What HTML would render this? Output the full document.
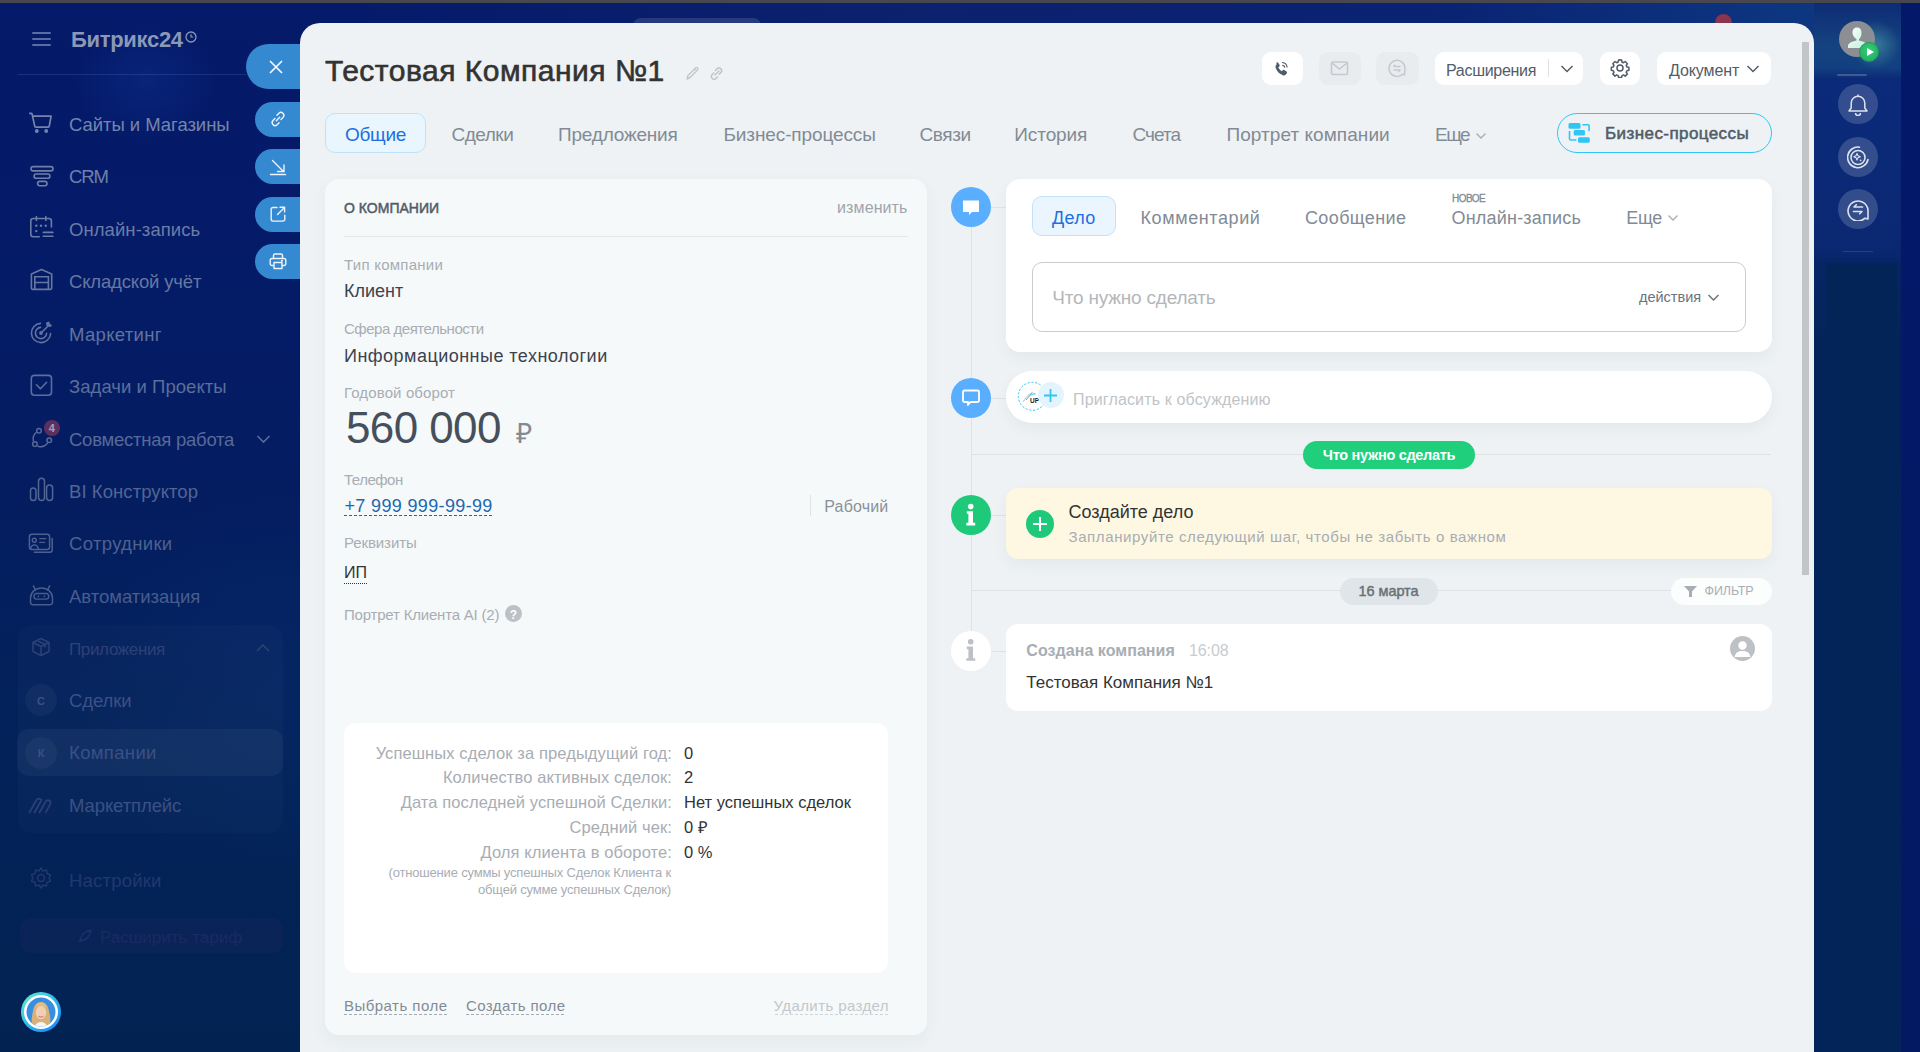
<!DOCTYPE html>
<html><head><meta charset="utf-8"><style>
*{box-sizing:border-box;margin:0;padding:0}
html,body{width:1920px;height:1052px;overflow:hidden}
body{font-family:"Liberation Sans",sans-serif;position:relative;background:#03186a}
.a{position:absolute}
.t{position:absolute;white-space:nowrap}
#bg{left:0;top:0;width:1920px;height:1052px;background:linear-gradient(180deg,#041a6a 0%,#041b68 25%,#041d60 47%,#03225a 70%,#022352 100%)}
#glow{left:0;top:0;width:300px;height:1052px;background:radial-gradient(ellipse 70px 60px at 145px 80px,rgba(30,90,200,0.16),transparent),radial-gradient(ellipse 200px 200px at 280px 680px,rgba(20,80,160,0.10),transparent)}
#rp{left:1814px;top:0;width:87px;height:80px;background:linear-gradient(180deg,#0c2a74 0%,#15427f 55%,#123f80 85%,#0b2875 100%)}
#rp2{left:1814px;top:78px;width:87px;height:974px;background:linear-gradient(180deg,#0b2a7a 0px,#0a2872 170px,#062566 185px,#03245a 260px,#02245a 974px)}
#rp3{left:1826px;top:263px;width:71px;height:789px;background:linear-gradient(180deg,#022456 0%,#022457 100%)}
#slider{left:300px;top:23px;width:1514px;height:1040px;background:#eef2f4;border-radius:20px 20px 0 0}
</style></head><body>
<div class="a" id="bg"></div>
<div class="a" id="glow"></div>
<div class="a" style="left:0px;top:0px;width:1920px;height:3px;background:#48474f"></div>
<div class="a" style="left:32px;top:32px;width:19px;height:2px;background:#5a6ca2;border-radius:1px"></div>
<div class="a" style="left:32px;top:38px;width:19px;height:2px;background:#5a6ca2;border-radius:1px"></div>
<div class="a" style="left:32px;top:44px;width:19px;height:2px;background:#5a6ca2;border-radius:1px"></div>
<div class="t" style="left:71px;top:29.38px;font-size:22px;line-height:22px;color:#8c98b6;font-weight:700;letter-spacing:-0.3px;">Битрикс24</div>
<svg class="a" style="left:185px;top:31px;" width="12" height="12" viewBox="0 0 12 12"><circle cx="6" cy="6" r="5" fill="none" stroke="#8c98b6" stroke-width="1.3"/><path d="M6 3.2V6h2.3" fill="none" stroke="#8c98b6" stroke-width="1.2"/></svg>
<div class="a" style="left:18px;top:74px;width:228px;height:1px;background:rgba(120,150,220,0.18)"></div>
<div class="t" style="left:69px;top:116.34px;font-size:18.5px;line-height:18.5px;color:#7585ab;font-weight:400;letter-spacing:-0.04px;">Сайты и Магазины</div>
<svg class="a" style="left:24px;top:103px;" width="32" height="32" viewBox="24 103 32 32"><path d="M29.8 113.4h1.3c.5 0 .9.3 1 .8l2.7 12.2c.1.5.5.8 1 .8h12.4c.5 0 .9-.3 1-.8l1.9-10.2H32.6" fill="none" stroke="#7585ab" stroke-width="1.7" stroke-linejoin="round" stroke-linecap="round"/><circle cx="36.8" cy="131" r="1.9" fill="#7585ab"/><circle cx="46.2" cy="131" r="1.9" fill="#7585ab"/></svg>
<div class="t" style="left:69px;top:168.34px;font-size:18.5px;line-height:18.5px;color:#7080a8;font-weight:400;letter-spacing:-1.05px;">CRM</div>
<svg class="a" style="left:24px;top:155px;" width="32" height="32" viewBox="24 155 32 32"><rect x="31" y="166.6" width="22" height="4.3" rx="2.15" fill="none" stroke="#7080a8" stroke-width="1.6"/><rect x="34.1" y="174" width="15.8" height="4.3" rx="2.15" fill="none" stroke="#7080a8" stroke-width="1.6"/><rect x="37.6" y="181.4" width="9.4" height="4.3" rx="2.15" fill="none" stroke="#7080a8" stroke-width="1.6"/></svg>
<div class="t" style="left:69px;top:221.34px;font-size:18.5px;line-height:18.5px;color:#6b7ca5;font-weight:400;letter-spacing:0.067px;">Онлайн-запись</div>
<svg class="a" style="left:24px;top:208px;" width="32" height="32" viewBox="24 208 32 32"><path d="M51.4 227V221a2.5 2.5 0 0 0-2.5-2.5H33.3a2.5 2.5 0 0 0-2.5 2.5v13.2a2.5 2.5 0 0 0 2.5 2.5h6" fill="none" stroke="#6b7ca5" stroke-width="1.6" stroke-linecap="round"/><path d="M36.4 216.5v4M45.8 216.5v4M43.3 232.4h9.6M43.3 236.3h9.6" stroke="#6b7ca5" stroke-width="1.6" stroke-linecap="round"/><circle cx="36.3" cy="225.8" r="1.2" fill="#6b7ca5"/><circle cx="41" cy="225.8" r="1.2" fill="#6b7ca5"/><circle cx="45.7" cy="225.8" r="1.2" fill="#6b7ca5"/><circle cx="36.3" cy="231.1" r="1.2" fill="#6b7ca5"/></svg>
<div class="t" style="left:69px;top:273.34px;font-size:18.5px;line-height:18.5px;color:#6677a1;font-weight:400;letter-spacing:-0.162px;">Складской учёт</div>
<svg class="a" style="left:24px;top:260px;" width="32" height="32" viewBox="24 260 32 32"><path d="M31.4 274l10.1-4.6 10.2 4.6v14.2a1.2 1.2 0 0 1-1.2 1.2H32.6a1.2 1.2 0 0 1-1.2-1.2z" fill="none" stroke="#6677a1" stroke-width="1.6" stroke-linejoin="round"/><path d="M34.8 289.4v-12.7h13.6v12.7M34.8 282.5h13.6" fill="none" stroke="#6677a1" stroke-width="1.6"/></svg>
<div class="t" style="left:69px;top:326.34px;font-size:18.5px;line-height:18.5px;color:#61739e;font-weight:400;letter-spacing:0.312px;">Маркетинг</div>
<svg class="a" style="left:24px;top:313px;" width="32" height="32" viewBox="24 313 32 32"><path d="M50.6 333.5A9.6 9.6 0 1 1 40.5 323.4" fill="none" stroke="#61739e" stroke-width="1.6" stroke-linecap="round"/><path d="M46.6 333.4A5.6 5.6 0 1 1 40.6 327.4" fill="none" stroke="#61739e" stroke-width="1.6" stroke-linecap="round"/><circle cx="41" cy="333" r="1.9" fill="#61739e"/><path d="M41 333l6.3-6.3" stroke="#61739e" stroke-width="1.6" stroke-linecap="round"/><path d="M46.5 322.8l.6 3.2 3.4.6 1-1.5-2-.6-.6-2.5z" fill="#61739e" stroke="#61739e" stroke-width="1" stroke-linejoin="round"/></svg>
<div class="t" style="left:69px;top:378.34px;font-size:18.5px;line-height:18.5px;color:#5c6e9b;font-weight:400;letter-spacing:0.04px;">Задачи и Проекты</div>
<svg class="a" style="left:24px;top:365px;" width="32" height="32" viewBox="24 365 32 32"><rect x="31.3" y="375.4" width="20.2" height="19.9" rx="3.2" fill="none" stroke="#5c6e9b" stroke-width="1.6"/><path d="M36.4 384.8l4 4 6.2-6.5" fill="none" stroke="#5c6e9b" stroke-width="1.6" stroke-linecap="round" stroke-linejoin="round"/></svg>
<div class="t" style="left:69px;top:431.34px;font-size:18.5px;line-height:18.5px;color:#576a98;font-weight:400;letter-spacing:-0.244px;">Совместная работа</div>
<svg class="a" style="left:24px;top:418px;" width="32" height="32" viewBox="24 418 32 32"><circle cx="39" cy="430.8" r="2.3" fill="none" stroke="#576a98" stroke-width="1.5"/><circle cx="49.2" cy="440.2" r="2.3" fill="none" stroke="#576a98" stroke-width="1.5"/><circle cx="34.9" cy="444.1" r="2.3" fill="none" stroke="#576a98" stroke-width="1.5"/><path d="M36.2 432.5A8.5 8.5 0 0 0 33.3 440.6M38 446.2A8.5 8.5 0 0 0 47.4 443.4" fill="none" stroke="#576a98" stroke-width="1.5" stroke-linecap="round"/></svg>
<div class="t" style="left:69px;top:483.34px;font-size:18.5px;line-height:18.5px;color:#526594;font-weight:400;letter-spacing:0.069px;">BI Конструктор</div>
<svg class="a" style="left:24px;top:470px;" width="32" height="32" viewBox="24 470 32 32"><rect x="30.5" y="488" width="5.5" height="12.5" rx="2.75" fill="none" stroke="#526594" stroke-width="1.5"/><rect x="38.5" y="478.2" width="6" height="22.3" rx="3" fill="none" stroke="#526594" stroke-width="1.5"/><rect x="46.6" y="485" width="6" height="15.5" rx="3" fill="none" stroke="#526594" stroke-width="1.5"/></svg>
<div class="t" style="left:69px;top:535.34px;font-size:18.5px;line-height:18.5px;color:#4d6191;font-weight:400;letter-spacing:0.333px;">Сотрудники</div>
<svg class="a" style="left:24px;top:522px;" width="32" height="32" viewBox="24 522 32 32"><rect x="29.4" y="534.2" width="20.2" height="15.3" rx="2.5" fill="none" stroke="#4d6191" stroke-width="1.5"/><path d="M34.3 552.3h15.4a2.5 2.5 0 0 0 2.5-2.5v-11.4" fill="none" stroke="#4d6191" stroke-width="1.5" stroke-linecap="round"/><circle cx="34.3" cy="540.2" r="2" fill="none" stroke="#4d6191" stroke-width="1.4"/><path d="M30.5 548.5c.8-2.4 2.2-3.6 3.8-3.6s3.2 1.2 4 3.6M39.8 538.6h6M39.8 542.4h4.7" fill="none" stroke="#4d6191" stroke-width="1.4" stroke-linecap="round"/></svg>
<div class="t" style="left:69px;top:588.34px;font-size:18.5px;line-height:18.5px;color:#485c8e;font-weight:400;letter-spacing:-0.017px;">Автоматизация</div>
<svg class="a" style="left:24px;top:575px;" width="32" height="32" viewBox="24 575 32 32"><path d="M33.4 585.8l2 4M49.6 585.8l-2 4" stroke="#485c8e" stroke-width="1.5" stroke-linecap="round"/><path d="M30.5 598a11 10 0 0 1 22 0v4.3a2.4 2.4 0 0 1-2.4 2.4H32.9a2.4 2.4 0 0 1-2.4-2.4z" fill="none" stroke="#485c8e" stroke-width="1.5"/><rect x="33.9" y="593.5" width="14.9" height="5.6" rx="2.8" fill="none" stroke="#485c8e" stroke-width="1.4"/><circle cx="38.4" cy="596.3" r="0.9" fill="#485c8e"/><circle cx="44.3" cy="596.3" r="0.9" fill="#485c8e"/></svg>
<svg class="a" style="left:257px;top:589px;" width="14" height="10" viewBox="0 0 14 10"></svg>
<svg class="a" style="left:256px;top:434px;" width="15" height="10" viewBox="0 0 15 10"><path d="M1.5 2l6 6 6-6" fill="none" stroke="#576a98" stroke-width="1.6"/></svg>
<div class="a" style="left:43.8px;top:419.8px;width:16px;height:16px;background:#5e2f5c;border-radius:8px"></div>
<div class="t" style="left:-448.2px;width:1000px;text-align:center;top:422.69px;font-size:11px;line-height:11px;color:#9aa3c2;font-weight:700;letter-spacing:0px;">4</div>
<div class="a" style="left:18px;top:625px;width:265px;height:208px;background:rgba(255,255,255,0.018);border-radius:14px"></div>
<svg class="a" style="left:31px;top:637px;" width="20" height="20" viewBox="0 0 20 20"><path d="M10 1.5l8 4v9l-8 4-8-4v-9z M2 5.5l8 4 8-4 M10 9.5v9 M6 3.5l8 4v3" fill="none" stroke="#2d4177" stroke-width="1.5" stroke-linejoin="round"/></svg>
<div class="t" style="left:69px;top:640.61px;font-size:17px;line-height:17px;color:#2d4177;font-weight:400;letter-spacing:-0.35px;">Приложения</div>
<svg class="a" style="left:256px;top:643px;" width="14" height="9" viewBox="0 0 14 9"><path d="M1 8l6-6 6 6" fill="none" stroke="#2d4177" stroke-width="1.5"/></svg>
<div class="a" style="left:25px;top:684px;width:32px;height:32px;background:rgba(255,255,255,0.04);border-radius:16px"></div>
<div class="t" style="left:-459px;width:1000px;text-align:center;top:695.69px;font-size:11px;line-height:11px;color:#3b5086;font-weight:700;letter-spacing:0px;">С</div>
<div class="t" style="left:69px;top:692.34px;font-size:18.5px;line-height:18.5px;color:#3b5086;font-weight:400;letter-spacing:-0.1px;">Сделки</div>
<div class="a" style="left:17px;top:729px;width:266px;height:47px;background:rgba(255,255,255,0.045);border-radius:12px"></div>
<div class="a" style="left:25px;top:737px;width:32px;height:32px;background:rgba(255,255,255,0.04);border-radius:16px"></div>
<div class="t" style="left:-459px;width:1000px;text-align:center;top:747.69px;font-size:11px;line-height:11px;color:#3b5086;font-weight:700;letter-spacing:0px;">К</div>
<div class="t" style="left:69px;top:744.34px;font-size:18.5px;line-height:18.5px;color:#3b5086;font-weight:400;letter-spacing:0.35px;">Компании</div>
<svg class="a" style="left:24px;top:790px;" width="32" height="32" viewBox="24 790 32 32"><path d="M29.5 812.5l7-12.5M34.5 812.5l7-12.5M39.5 812.5l6.2-11a2.6 2.6 0 0 1 4.6 2.4l-4.5 8.6" fill="none" stroke="#2d4177" stroke-width="1.6" stroke-linecap="round"/><path d="M36.5 800a2.6 2.6 0 0 1 4.6 0M41.5 800" fill="none" stroke="#2d4177" stroke-width="1.6"/></svg>
<div class="t" style="left:69px;top:797.34px;font-size:18.5px;line-height:18.5px;color:#3b5086;font-weight:400;letter-spacing:-0.1px;">Маркетплейс</div>
<svg class="a" style="left:29px;top:866px;" width="24" height="24" viewBox="0 0 24 24"><circle cx="12" cy="12" r="3.5" fill="none" stroke="#22386c" stroke-width="1.6"/><path d="M12 2l2 3 3.5-1 .5 3.5 3.5 1.5-1.5 3 1.5 3-3.5 1.5-.5 3.5-3.5-1-2 3-2-3-3.5 1-.5-3.5L2.5 15 4 12 2.5 9 6 7.5 6.5 4 10 5z" fill="none" stroke="#22386c" stroke-width="1.5" stroke-linejoin="round"/></svg>
<div class="t" style="left:69px;top:872.34px;font-size:18.5px;line-height:18.5px;color:#22386c;font-weight:400;letter-spacing:0.2px;">Настройки</div>
<div class="a" style="left:20px;top:918px;width:263px;height:35px;background:rgba(110,50,110,0.08);border-radius:10px"></div>
<div class="t" style="left:100px;top:928.61px;font-size:17px;line-height:17px;color:#1a2a62;font-weight:400;letter-spacing:0px;">Расширить тариф</div>
<svg class="a" style="left:77px;top:928px;" width="16" height="16" viewBox="0 0 16 16"><path d="M3 13c0-5 4-10 11-11-1 7-6 11-11 11z M5 11l-3 3" fill="none" stroke="#1f3068" stroke-width="1.4"/></svg>
<svg class="a" style="left:21px;top:992px;" width="40" height="40" viewBox="0 0 40 40"><defs><linearGradient id="avg" x1="0" y1="0" x2="1" y2="1"><stop offset="0" stop-color="#6ff0c0"/><stop offset="0.5" stop-color="#2bb8f0"/><stop offset="1" stop-color="#1a7ef8"/></linearGradient><clipPath id="avc"><circle cx="20" cy="20" r="14.5"/></clipPath></defs><circle cx="20" cy="20" r="20" fill="url(#avg)"/><circle cx="20" cy="20" r="17" fill="#fff"/><g clip-path="url(#avc)"><rect x="0" y="0" width="40" height="40" fill="#3a8ee2"/><path d="M11 34c-1-6 0-10 1-15 1-6 4-9 8-9s7 3 8 9c1 5 2 9 1 15z" fill="#d6b27a"/><ellipse cx="20" cy="20.5" rx="5.2" ry="6.8" fill="#f1cfb2"/><path d="M13 36c1-4 4-6 7-6s6 2 7 6z" fill="#f5f5f5"/><path d="M14.5 16c1-4 3-5.5 5.5-5.5s4.5 1.5 5.5 5.5c-2-1.5-3.5-2.5-5.5-2.5s-3.5 1-5.5 2.5z" fill="#e0c088"/><path d="M17.6 24.3q2.4 1.6 4.8 0" stroke="#d07070" stroke-width="1" fill="none"/></g></svg>
<div class="a" style="left:246px;top:44px;width:70px;height:45px;border-radius:22.5px 0 0 22.5px;background:#3589d0"></div>
<svg class="a" style="left:269px;top:60px;" width="14" height="14" viewBox="0 0 14 14"><path d="M1 1l12 12M13 1L1 13" stroke="#fff" stroke-width="1.6"/></svg>
<div class="a" style="left:255px;top:102px;width:60px;height:35px;border-radius:17.5px 0 0 17.5px;background:#3589d0"></div>
<div class="a" style="left:255px;top:149px;width:60px;height:35px;border-radius:17.5px 0 0 17.5px;background:#3589d0"></div>
<div class="a" style="left:255px;top:197px;width:60px;height:35px;border-radius:17.5px 0 0 17.5px;background:#3589d0"></div>
<div class="a" style="left:255px;top:244px;width:60px;height:35px;border-radius:17.5px 0 0 17.5px;background:#3589d0"></div>
<svg class="a" style="left:268px;top:109px;" width="20" height="20" viewBox="0 0 20 20"><path d="M8.3 11.7l3.4-3.4M7 9.6l-2 2a2.9 2.9 0 0 0 4.1 4.1l2-2M13 10.4l2-2a2.9 2.9 0 0 0-4.1-4.1l-2 2" fill="none" stroke="#eef4fa" stroke-width="1.4" stroke-linecap="round"/></svg>
<svg class="a" style="left:268px;top:156px;" width="20" height="20" viewBox="0 0 20 20"><path d="M4.5 4.5l11 11M16 9v6.5H9.5M2.5 18.5h15" fill="none" stroke="#eef4fa" stroke-width="1.4" stroke-linecap="round"/></svg>
<svg class="a" style="left:268px;top:204px;" width="20" height="20" viewBox="0 0 20 20"><path d="M9 3.5H5A1.8 1.8 0 0 0 3.2 5.3v10A1.8 1.8 0 0 0 5 17.1h10a1.8 1.8 0 0 0 1.8-1.8v-4M9.5 10.5l7-7M12 3.3h4.6v4.6" fill="none" stroke="#eef4fa" stroke-width="1.4" stroke-linecap="round" stroke-linejoin="round"/></svg>
<svg class="a" style="left:268px;top:251px;" width="20" height="20" viewBox="0 0 20 20"><path d="M5.5 7.5V4.5a1.5 1.5 0 0 1 1.5-1.5h6a1.5 1.5 0 0 1 1.5 1.5v3M5.5 14.5H4A1.8 1.8 0 0 1 2.2 12.7V9.3A1.8 1.8 0 0 1 4 7.5h12a1.8 1.8 0 0 1 1.8 1.8v3.4a1.8 1.8 0 0 1-1.8 1.8h-1.5M6 11.5h8v6H6z M13 9.8h2" fill="none" stroke="#eef4fa" stroke-width="1.4" stroke-linejoin="round"/></svg>
<div class="a" id="rp2"></div>
<div class="a" id="rp"></div>
<div class="a" id="rp3"></div>
<div class="a" style="left:1901px;top:0px;width:19px;height:1052px;background:linear-gradient(180deg,#04186a,#031a62)"></div>
<div class="a" style="left:0px;top:0px;width:1920px;height:3px;background:#48474f"></div>
<div class="a" style="left:1850px;top:20px;width:50px;height:50px;border-radius:25px;background:radial-gradient(circle at 50% 50%,rgba(120,230,200,0.35),rgba(80,200,200,0) 70%)"></div>
<div class="a" style="left:1839px;top:21px;width:36px;height:36px;border-radius:18px;background:#8b8f94;overflow:hidden"><svg width="36" height="36" viewBox="0 0 36 36"><defs><linearGradient id="pg" x1="0" y1="0" x2="1" y2="1"><stop offset="0" stop-color="#ffffff"/><stop offset="1" stop-color="#b8f0d8"/></linearGradient></defs><path d="M13.5 12c0-4 1.8-5.5 4.5-5.5s4.5 1.5 4.5 5.5c0 3-1.5 5.5-2.5 6.2v1.3c3.5.8 7 2 8.5 4.5V27H9v-3c1.5-2.5 5-3.7 8.5-4.5v-1.3c-1-.7-4-3.2-4-6.2z" fill="url(#pg)"/></svg></div>
<div class="a" style="left:1859px;top:42px;width:20px;height:20px;border-radius:10px;background:radial-gradient(circle at 50% 40%,#35d07a,#1fa55a);border:1px solid #1d9d55"></div>
<svg class="a" style="left:1865px;top:47px;" width="10" height="10" viewBox="0 0 10 10"><path d="M2 1l7 4-7 4z" fill="#fff"/></svg>
<div class="a" style="left:1837px;top:74px;width:30px;height:2px;background:rgba(255,255,255,0.2);border-radius:1px"></div>
<div class="a" style="left:1838px;top:84px;width:40px;height:40px;background:rgba(255,255,255,0.17);border-radius:20px"></div>
<div class="a" style="left:1838px;top:137px;width:40px;height:40px;background:rgba(255,255,255,0.17);border-radius:20px"></div>
<div class="a" style="left:1838px;top:189px;width:40px;height:40px;background:rgba(255,255,255,0.17);border-radius:20px"></div>
<svg class="a" style="left:1847px;top:93px;" width="23" height="23" viewBox="0 0 23 23"><path d="M2 18h18l-2.2-3V10a6.8 6.8 0 0 0-13.6 0v5z M11 1.5v1.8 M8.5 20a2.5 2.5 0 0 0 5 0" fill="none" stroke="#dde3ee" stroke-width="1.5" stroke-linejoin="round"/></svg>
<svg class="a" style="left:1847px;top:146px;" width="23" height="23" viewBox="0 0 23 23"><path d="M21 13.5A10.3 10.3 0 1 1 12.5 1.2" fill="none" stroke="#dde3ee" stroke-width="1.6" stroke-linecap="round"/><circle cx="11" cy="11.5" r="7" fill="none" stroke="#dde3ee" stroke-width="1.6"/><path d="M10 7.5l1 2.3 2.3 1-2.3 1-1 2.3-1-2.3-2.3-1 2.3-1z" fill="none" stroke="#dde3ee" stroke-width="1.1" stroke-linejoin="round"/><circle cx="13.6" cy="14.3" r="0.9" fill="#dde3ee"/></svg>
<svg class="a" style="left:1847px;top:198px;" width="23" height="23" viewBox="0 0 23 23"><path d="M21 21l-3-.8A10 10 0 1 1 21 12z" fill="none" stroke="#dde3ee" stroke-width="1.6" stroke-linejoin="round"/><path d="M7 9h8.5M7 9l2.3-2.3M15 13.5H6.5M15 13.5l-2.3 2.3" fill="none" stroke="#dde3ee" stroke-width="1.6" stroke-linecap="round"/></svg>
<div class="a" style="left:1843px;top:251px;width:30px;height:1px;background:rgba(255,255,255,0.12)"></div>
<div class="a" style="left:300px;top:3px;width:1514px;height:40px;background:linear-gradient(90deg,rgba(255,255,255,0) 0%,rgba(255,255,255,0.03) 40%,rgba(60,110,200,0.10) 75%,rgba(40,140,200,0.25) 100%)"></div>
<div class="a" style="left:633px;top:18px;width:128px;height:20px;border-radius:8px;background:rgba(255,255,255,0.12)"></div>
<div class="a" style="left:1715px;top:14px;width:17px;height:17px;background:#8a3452;border-radius:9px"></div>
<div class="a" id="slider"></div>
<div class="a" style="left:1802px;top:42px;width:7px;height:533px;background:#c2c4c6"></div>
<div class="t" style="left:325px;top:55.60px;font-size:30px;line-height:30px;color:#333;font-weight:400;letter-spacing:0.5px;-webkit-text-stroke:0.6px #333;">Тестовая Компания №1</div>
<svg class="a" style="left:684px;top:66px;" width="16" height="16" viewBox="0 0 16 16"><path d="M3 13l1-3.5L11.5 2a1.4 1.4 0 0 1 2 2L6 11.5z M10.5 3l2 2" fill="none" stroke="#c3c6c9" stroke-width="1.4" stroke-linejoin="round"/></svg>
<svg class="a" style="left:708px;top:65px;" width="17" height="17" viewBox="0 0 17 17"><path d="M7 10l4-4M5.8 8L4 9.8a2.7 2.7 0 0 0 3.8 3.8L9.6 11.8M11.2 9.2L13 7.4a2.7 2.7 0 0 0-3.8-3.8L7.4 5.4" fill="none" stroke="#c3c6c9" stroke-width="1.5" stroke-linecap="round"/></svg>
<div class="a" style="left:1262px;top:52px;width:41px;height:33px;background:#fff;border-radius:9px"></div>
<svg class="a" style="left:1270px;top:58px;" width="22" height="22" viewBox="0 0 22 22"><path d="M6.5 4.5c.6-.4 1.3-.3 1.7.3l1.4 2.2c.3.6.2 1.2-.3 1.6l-.9.7c.6 1.6 1.9 3.1 3.5 3.9l.8-.9c.4-.5 1.1-.6 1.6-.2l2.2 1.5c.5.4.7 1.1.3 1.7l-.9 1.2c-.7.9-1.9 1.2-3 .8-3.4-1.3-6.1-4.1-7.3-7.6-.3-1.1 0-2.2.9-2.9z" fill="#525c69"/><path d="M12.5 4.5a5 5 0 0 1 4.5 4.5M12.8 7.3a2.3 2.3 0 0 1 1.9 1.9" fill="none" stroke="#525c69" stroke-width="1.2" stroke-linecap="round"/></svg>
<div class="a" style="left:1319px;top:52px;width:42px;height:33px;background:#e9ecef;border-radius:9px"></div>
<svg class="a" style="left:1330px;top:60px;" width="20" height="17" viewBox="0 0 20 17"><rect x="1.5" y="2" width="16" height="12.5" rx="1.5" fill="none" stroke="#c5c9cd" stroke-width="1.6"/><path d="M2 3l7.5 6 7.5-6" fill="none" stroke="#c5c9cd" stroke-width="1.6"/></svg>
<div class="a" style="left:1376px;top:52px;width:43px;height:33px;background:#e9ecef;border-radius:9px"></div>
<svg class="a" style="left:1387px;top:58px;" width="21" height="21" viewBox="0 0 21 21"><path d="M17.5 17l-2-.8A8 8 0 1 1 18 10z" fill="none" stroke="#c5c9cd" stroke-width="1.5" stroke-linejoin="round"/><path d="M6.5 8.5h7M6.5 8.5l1.8-1.8M13.5 12h-7M13.5 12l-1.8 1.8" fill="none" stroke="#c5c9cd" stroke-width="1.5"/></svg>
<div class="a" style="left:1435px;top:52px;width:148px;height:33px;background:#fff;border-radius:9px"></div>
<div class="t" style="left:1446px;top:62.96px;font-size:16px;line-height:16px;color:#525c69;font-weight:400;letter-spacing:-0.3px;">Расширения</div>
<div class="a" style="left:1548px;top:59px;width:1px;height:18px;background:#dfe2e5"></div>
<svg class="a" style="left:1560px;top:64px;" width="14" height="10" viewBox="0 0 14 10"><path d="M1.5 2l5.5 5.5L12.5 2" fill="none" stroke="#525c69" stroke-width="1.5"/></svg>
<div class="a" style="left:1600px;top:52px;width:40px;height:33px;background:#fff;border-radius:9px"></div>
<svg class="a" style="left:1610px;top:58px;" width="20" height="20" viewBox="0 0 20 20"><path d="M10 1.8l1.6.2.4 2 1.5.7 1.7-1.2 2.2 2.2-1.2 1.7.7 1.5 2 .4v3l-2 .4-.7 1.5 1.2 1.7-2.2 2.2-1.7-1.2-1.5.7-.4 2h-3l-.4-2-1.5-.7-1.7 1.2-2.2-2.2 1.2-1.7-.7-1.5-2-.4v-3l2-.4.7-1.5-1.2-1.7 2.2-2.2 1.7 1.2 1.5-.7.4-2z" fill="none" stroke="#525c69" stroke-width="1.5" stroke-linejoin="round"/><circle cx="10" cy="10" r="3" fill="none" stroke="#525c69" stroke-width="1.5"/></svg>
<div class="a" style="left:1657px;top:52px;width:114px;height:33px;background:#fff;border-radius:9px"></div>
<div class="t" style="left:1669px;top:62.96px;font-size:16px;line-height:16px;color:#525c69;font-weight:400;letter-spacing:-0.1px;">Документ</div>
<svg class="a" style="left:1746px;top:64px;" width="14" height="10" viewBox="0 0 14 10"><path d="M1.5 2l5.5 5.5L12.5 2" fill="none" stroke="#525c69" stroke-width="1.5"/></svg>
<div class="a" style="left:325px;top:113px;width:101px;height:40px;background:#e9f6fe;border:1px solid #bfe2fa;border-radius:10px"></div>
<div class="t" style="left:345px;top:125.42px;font-size:19px;line-height:19px;color:#1f6ee0;font-weight:400;letter-spacing:-0.3px;">Общие</div>
<div class="t" style="left:451.5px;top:125.42px;font-size:19px;line-height:19px;color:#828b95;font-weight:400;letter-spacing:-0.5px;">Сделки</div>
<div class="t" style="left:558px;top:125.42px;font-size:19px;line-height:19px;color:#828b95;font-weight:400;letter-spacing:-0.2px;">Предложения</div>
<div class="t" style="left:723.5px;top:125.42px;font-size:19px;line-height:19px;color:#828b95;font-weight:400;letter-spacing:-0.12px;">Бизнес-процессы</div>
<div class="t" style="left:919.5px;top:125.42px;font-size:19px;line-height:19px;color:#828b95;font-weight:400;letter-spacing:-0.4px;">Связи</div>
<div class="t" style="left:1014.3px;top:125.42px;font-size:19px;line-height:19px;color:#828b95;font-weight:400;letter-spacing:-0.1px;">История</div>
<div class="t" style="left:1132.5px;top:125.42px;font-size:19px;line-height:19px;color:#828b95;font-weight:400;letter-spacing:-0.95px;">Счета</div>
<div class="t" style="left:1226.5px;top:125.42px;font-size:19px;line-height:19px;color:#828b95;font-weight:400;letter-spacing:0.06px;">Портрет компании</div>
<div class="t" style="left:1435px;top:125.42px;font-size:19px;line-height:19px;color:#828b95;font-weight:400;letter-spacing:-1.5px;">Еще</div>
<svg class="a" style="left:1475px;top:131px;" width="12" height="9" viewBox="0 0 12 9"><path d="M1.5 2.5l4.5 4.5 4.5-4.5" fill="none" stroke="#a8adb4" stroke-width="1.3"/></svg>
<div class="a" style="left:1557px;top:113px;width:215px;height:40px;border:1.5px solid #2fc6f6;border-radius:20px"></div>
<svg class="a" style="left:1566px;top:121px;" width="26" height="24" viewBox="1566 121 26 24"><rect x="1568.5" y="123" width="12" height="5.7" rx="1.5" fill="#2fc6f6"/><rect x="1573.7" y="130" width="11.3" height="5.6" rx="1.5" fill="#2fc6f6"/><rect x="1578" y="137.2" width="11.8" height="5.6" rx="1.5" fill="#2fc6f6"/><path d="M1583 124.8h4.8a1.3 1.3 0 0 1 1.3 1.3v4.5M1569.5 131.5v7.2a1.3 1.3 0 0 0 1.3 1.3h5" fill="none" stroke="#2fc6f6" stroke-width="1.6" stroke-linecap="round"/></svg>
<div class="t" style="left:1605px;top:125.11px;font-size:17px;line-height:17px;color:#525c69;font-weight:400;letter-spacing:0.42px;-webkit-text-stroke:0.55px #525c69;">Бизнес-процессы</div>
<div class="a" style="left:325px;top:179px;width:602px;height:856px;background:#f6f9fa;border-radius:14px;box-shadow:0 6px 16px rgba(60,80,100,0.05)"></div>
<div class="t" style="left:344px;top:201.15px;font-size:14px;line-height:14px;color:#525c69;font-weight:400;letter-spacing:0.02px;-webkit-text-stroke:0.5px #525c69;">О КОМПАНИИ</div>
<div class="t" style="right:1012.5px;top:200.46px;font-size:16px;line-height:16px;color:#a0a5ab;font-weight:400;letter-spacing:0.1px;">изменить</div>
<div class="a" style="left:344px;top:236px;width:564px;height:1px;background:#e2e6e9"></div>
<div class="t" style="left:344px;top:257.30px;font-size:15px;line-height:15px;color:#a8adb4;font-weight:400;letter-spacing:0.25px;">Тип компании</div>
<div class="t" style="left:344px;top:281.76px;font-size:18px;line-height:18px;color:#3b4250;font-weight:400;letter-spacing:0px;">Клиент</div>
<div class="t" style="left:344px;top:321.30px;font-size:15px;line-height:15px;color:#a8adb4;font-weight:400;letter-spacing:-0.47px;">Сфера деятельности</div>
<div class="t" style="left:344px;top:346.76px;font-size:18px;line-height:18px;color:#3b4250;font-weight:400;letter-spacing:0.47px;">Информационные технологии</div>
<div class="t" style="left:344px;top:385.30px;font-size:15px;line-height:15px;color:#a8adb4;font-weight:400;letter-spacing:0.12px;">Годовой оборот</div>
<div class="t" style="left:346px;top:406.25px;font-size:44px;line-height:44px;color:#46505c;font-weight:400;letter-spacing:-0.6px;">560 000</div>
<div class="t" style="left:516px;top:419.80px;font-size:28px;line-height:28px;color:#828b95;font-weight:400;letter-spacing:0px;">₽</div>
<div class="t" style="left:344px;top:471.80px;font-size:15px;line-height:15px;color:#a8adb4;font-weight:400;letter-spacing:-0.51px;">Телефон</div>
<div class="t" style="left:344.5px;top:496.76px;font-size:18px;line-height:18px;color:#2067b0;font-weight:400;letter-spacing:0.35px;">+7 999 999-99-99</div>
<div class="a" style="left:344px;top:514.5px;width:149px;height:1px;background:repeating-linear-gradient(90deg,#2067b0 0 3px,transparent 3px 5px)"></div>
<div class="a" style="left:810px;top:495px;width:1px;height:21px;background:#dfe3e6"></div>
<div class="t" style="left:824.3px;top:498.76px;font-size:16px;line-height:16px;color:#8a9199;font-weight:400;letter-spacing:0.15px;">Рабочий</div>
<div class="t" style="left:344px;top:535.30px;font-size:15px;line-height:15px;color:#a8adb4;font-weight:400;letter-spacing:-0.1px;">Реквизиты</div>
<div class="t" style="left:344px;top:565.46px;font-size:16px;line-height:16px;color:#333;font-weight:400;letter-spacing:0px;">ИП</div>
<div class="a" style="left:344px;top:582.5px;width:24px;height:1px;background:repeating-linear-gradient(90deg,#333 0 1px,transparent 1px 2px)"></div>
<div class="t" style="left:344px;top:606.80px;font-size:15px;line-height:15px;color:#a8adb4;font-weight:400;letter-spacing:-0.2px;">Портрет Клиента AI (2)</div>
<div class="a" style="left:505px;top:605px;width:17px;height:17px;border-radius:9px;background:#bdc1c6"></div>
<div class="t" style="left:13.5px;width:1000px;text-align:center;top:608.84px;font-size:12px;line-height:12px;color:#fff;font-weight:700;letter-spacing:0px;">?</div>
<div class="a" style="left:344px;top:723px;width:544px;height:250px;background:#fff;border-radius:12px"></div>
<div class="t" style="right:1248px;top:744.53px;font-size:16.5px;line-height:16.5px;color:#a8adb4;font-weight:400;letter-spacing:0.1px;">Успешных сделок за предыдущий год:</div>
<div class="t" style="left:684px;top:744.53px;font-size:16.5px;line-height:16.5px;color:#333;font-weight:400;letter-spacing:0px;">0</div>
<div class="t" style="right:1248px;top:769.03px;font-size:16.5px;line-height:16.5px;color:#a8adb4;font-weight:400;letter-spacing:0.1px;">Количество активных сделок:</div>
<div class="t" style="left:684px;top:769.03px;font-size:16.5px;line-height:16.5px;color:#333;font-weight:400;letter-spacing:0px;">2</div>
<div class="t" style="right:1248px;top:794.03px;font-size:16.5px;line-height:16.5px;color:#a8adb4;font-weight:400;letter-spacing:0.1px;">Дата последней успешной Сделки:</div>
<div class="t" style="left:684px;top:794.03px;font-size:16.5px;line-height:16.5px;color:#333;font-weight:400;letter-spacing:0px;">Нет успешных сделок</div>
<div class="t" style="right:1248px;top:819.03px;font-size:16.5px;line-height:16.5px;color:#a8adb4;font-weight:400;letter-spacing:0.1px;">Средний чек:</div>
<div class="t" style="left:684px;top:819.03px;font-size:16.5px;line-height:16.5px;color:#333;font-weight:400;letter-spacing:0px;">0 ₽</div>
<div class="t" style="right:1248px;top:844.03px;font-size:16.5px;line-height:16.5px;color:#a8adb4;font-weight:400;letter-spacing:0.1px;">Доля клиента в обороте:</div>
<div class="t" style="left:684px;top:844.03px;font-size:16.5px;line-height:16.5px;color:#333;font-weight:400;letter-spacing:0px;">0 %</div>
<div class="t" style="right:1249px;top:865.50px;font-size:13px;line-height:13px;color:#a8adb4;font-weight:400;letter-spacing:-0.17px;">(отношение суммы успешных Сделок Клиента к</div>
<div class="t" style="right:1249px;top:883.00px;font-size:13px;line-height:13px;color:#a8adb4;font-weight:400;letter-spacing:-0.17px;">общей сумме успешных Сделок)</div>
<div class="t" style="left:344px;top:997.80px;font-size:15px;line-height:15px;color:#828b95;font-weight:400;letter-spacing:0.47px;">Выбрать поле</div>
<div class="a" style="left:344px;top:1014px;width:103px;height:1px;background:repeating-linear-gradient(90deg,#a5abb2 0 3px,transparent 3px 5px)"></div>
<div class="t" style="left:466px;top:997.80px;font-size:15px;line-height:15px;color:#828b95;font-weight:400;letter-spacing:0.42px;">Создать поле</div>
<div class="a" style="left:466px;top:1014px;width:99px;height:1px;background:repeating-linear-gradient(90deg,#a5abb2 0 3px,transparent 3px 5px)"></div>
<div class="t" style="right:1031px;top:997.80px;font-size:15px;line-height:15px;color:#c3c7cc;font-weight:400;letter-spacing:0.4px;">Удалить раздел</div>
<div class="a" style="left:775px;top:1014px;width:114px;height:1px;background:repeating-linear-gradient(90deg,#d0d3d7 0 3px,transparent 3px 5px)"></div>
<div class="a" style="left:971px;top:207px;width:1px;height:424px;background:#dfe2e5"></div>
<div class="a" style="left:991px;top:207px;width:15px;height:1px;background:#dfe2e5"></div>
<div class="a" style="left:991px;top:398px;width:15px;height:1px;background:#dfe2e5"></div>
<div class="a" style="left:971px;top:454px;width:800px;height:1px;background:#dfe2e5"></div>
<div class="a" style="left:991px;top:515px;width:15px;height:1px;background:#dfe2e5"></div>
<div class="a" style="left:971px;top:590px;width:800px;height:1px;background:#dfe2e5"></div>
<div class="a" style="left:990px;top:651px;width:16px;height:1px;background:#dfe2e5"></div>
<div class="a" style="left:951px;top:187px;width:40px;height:40px;background:#5aaeff;border-radius:20px"></div>
<svg class="a" style="left:961px;top:198px;" width="20" height="20" viewBox="0 0 20 20"><path d="M2 2.5h16v11.5H11l-3 3v-3H2z" fill="#fff"/></svg>
<div class="a" style="left:951px;top:378px;width:40px;height:40px;background:#5aaeff;border-radius:20px"></div>
<svg class="a" style="left:961px;top:388px;" width="20" height="20" viewBox="0 0 20 20"><path d="M3.5 2.5h13a1.5 1.5 0 0 1 1.5 1.5v8.5a1.5 1.5 0 0 1-1.5 1.5H9.5L7 17v-3H3.5A1.5 1.5 0 0 1 2 12.5V4a1.5 1.5 0 0 1 1.5-1.5z" fill="none" stroke="#fff" stroke-width="1.8" stroke-linejoin="round"/></svg>
<div class="a" style="left:951px;top:495px;width:40px;height:40px;background:#1ec979;border-radius:20px"></div>
<svg class="a" style="left:951px;top:495px;" width="40" height="40" viewBox="0 0 40 40"><circle cx="19.7" cy="11.6" r="2.8" fill="#fff"/><path d="M15.8 16.2h6.2v11.6h2.2v2.6h-8.9v-2.6h2.1v-9h-1.6z" fill="#fff"/></svg>
<div class="a" style="left:951px;top:631px;width:40px;height:40px;background:#fff;border-radius:20px"></div>
<svg class="a" style="left:951px;top:631px;" width="40" height="40" viewBox="0 0 40 40"><circle cx="19.7" cy="10.8" r="2.8" fill="#bdc1c6"/><path d="M15.8 15.6h6.2v11.6h2.2v2.6h-8.9v-2.6h2.1v-9h-1.6z" fill="#bdc1c6"/></svg>
<div class="a" style="left:1006px;top:179px;width:766px;height:173px;background:#fff;border-radius:14px;box-shadow:0 6px 14px rgba(60,80,100,0.06)"></div>
<div class="a" style="left:1032px;top:196px;width:84px;height:40px;background:#ebf5fd;border:1px solid #c2e0f8;border-radius:10px"></div>
<div class="t" style="left:1052px;top:208.76px;font-size:18px;line-height:18px;color:#1f6ee0;font-weight:400;letter-spacing:0.3px;">Дело</div>
<div class="t" style="left:1140.5px;top:208.76px;font-size:18px;line-height:18px;color:#828b95;font-weight:400;letter-spacing:0.6px;">Комментарий</div>
<div class="t" style="left:1305px;top:208.76px;font-size:18px;line-height:18px;color:#828b95;font-weight:400;letter-spacing:0.37px;">Сообщение</div>
<div class="t" style="left:1452px;top:194.03px;font-size:10px;line-height:10px;color:#828b95;font-weight:400;letter-spacing:-0.55px;-webkit-text-stroke:0.3px #828b95;">НОВОЕ</div>
<div class="t" style="left:1451.5px;top:208.76px;font-size:18px;line-height:18px;color:#828b95;font-weight:400;letter-spacing:0.2px;">Онлайн-запись</div>
<div class="t" style="left:1626.2px;top:208.76px;font-size:18px;line-height:18px;color:#828b95;font-weight:400;letter-spacing:-0.3px;">Еще</div>
<svg class="a" style="left:1667px;top:213px;" width="12" height="9" viewBox="0 0 12 9"><path d="M1.5 2.5l4.5 4.5 4.5-4.5" fill="none" stroke="#a8adb4" stroke-width="1.3"/></svg>
<div class="a" style="left:1032px;top:262px;width:714px;height:70px;border:1px solid #c9cccf;border-radius:10px"></div>
<div class="t" style="left:1052.3px;top:287.92px;font-size:19px;line-height:19px;color:#b3b7bb;font-weight:400;letter-spacing:-0.2px;">Что нужно сделать</div>
<div class="t" style="left:1639px;top:289.73px;font-size:14.5px;line-height:14.5px;color:#6a737f;font-weight:400;letter-spacing:0px;">действия</div>
<svg class="a" style="left:1707px;top:293px;" width="13" height="9" viewBox="0 0 13 9"><path d="M1.5 2l5 5 5-5" fill="none" stroke="#6a737f" stroke-width="1.5"/></svg>
<div class="a" style="left:1006px;top:371px;width:766px;height:52px;background:#fff;border-radius:26px;box-shadow:0 6px 14px rgba(60,80,100,0.06)"></div>
<svg class="a" style="left:1017px;top:381px;" width="32" height="32" viewBox="1017 381 32 32"><circle cx="1032.3" cy="396.3" r="14" fill="#fff" stroke="#2fc6f6" stroke-width="1" stroke-dasharray="2.2 1.6"/><path d="M1023.5 401.5c2-4 5-7 9-9" fill="none" stroke="#888" stroke-width="0.8" stroke-dasharray="1.5 0.8"/><path d="M1026 400l5.5-6.5M1031 395.5l1.5-1.5h3" fill="none" stroke="#2fb4e6" stroke-width="1"/><text x="1030" y="402.5" font-family="Liberation Sans" font-weight="700" font-size="6.5" fill="#222">UP</text></svg>
<div class="a" style="left:1037.5px;top:382px;width:26px;height:26px;background:#e3f4ff;border-radius:13px"></div>
<svg class="a" style="left:1042px;top:387px;" width="17" height="17" viewBox="0 0 17 17"><path d="M8.5 2v13M2 8.5h13" stroke="#2fc6f6" stroke-width="1.8"/></svg>
<div class="t" style="left:1073px;top:391.96px;font-size:16px;line-height:16px;color:#c0c4c8;font-weight:400;letter-spacing:0.15px;">Пригласить к обсуждению</div>
<div class="a" style="left:1303px;top:441px;width:172px;height:28px;background:#1fcf7c;border-radius:14px"></div>
<div class="t" style="left:889px;width:1000px;text-align:center;top:448.23px;font-size:14.5px;line-height:14.5px;color:#fff;font-weight:700;letter-spacing:-0.3px;">Что нужно сделать</div>
<div class="a" style="left:1006px;top:488px;width:766px;height:71px;background:#fef8e2;border-radius:12px;box-shadow:0 6px 14px rgba(60,80,100,0.05)"></div>
<div class="a" style="left:1026px;top:509.5px;width:28px;height:28px;background:#1ec979;border-radius:14px"></div>
<svg class="a" style="left:1030px;top:513.5px;" width="20" height="20" viewBox="0 0 20 20"><path d="M10 3v14M3 10h14" stroke="#fff" stroke-width="2"/></svg>
<div class="t" style="left:1068.5px;top:502.76px;font-size:18px;line-height:18px;color:#333;font-weight:400;letter-spacing:0px;">Создайте дело</div>
<div class="t" style="left:1068.5px;top:529.00px;font-size:15px;line-height:15px;color:#a8adb4;font-weight:400;letter-spacing:0.61px;">Запланируйте следующий шаг, чтобы не забыть о важном</div>
<div class="a" style="left:1340px;top:578px;width:98px;height:27px;background:#dfe5e8;border-radius:13.5px"></div>
<div class="t" style="left:888.5px;width:1000px;text-align:center;top:583.73px;font-size:14.5px;line-height:14.5px;color:#6a7076;font-weight:400;letter-spacing:-0.05px;-webkit-text-stroke:0.45px #6a7076;">16 марта</div>
<div class="a" style="left:1671px;top:578px;width:101px;height:27px;background:#fcfdfd;border-radius:13.5px"></div>
<svg class="a" style="left:1683px;top:585px;" width="15" height="13" viewBox="0 0 15 13"><path d="M1 1h13l-5 5.5V12H6V6.5z" fill="#a8adb4"/></svg>
<div class="t" style="left:1704.5px;top:585.22px;font-size:12.5px;line-height:12.5px;color:#a8adb4;font-weight:400;letter-spacing:-0.1px;">ФИЛЬТР</div>
<div class="a" style="left:1006px;top:624px;width:766px;height:87px;background:#fff;border-radius:12px"></div>
<div class="t" style="left:1026.3px;top:642.96px;font-size:16px;line-height:16px;color:#a8adb4;font-weight:700;letter-spacing:0.05px;">Создана компания</div>
<div class="t" style="left:1189px;top:642.96px;font-size:16px;line-height:16px;color:#c8ccd0;font-weight:400;letter-spacing:-0.1px;">16:08</div>
<div class="t" style="left:1026.3px;top:673.61px;font-size:17px;line-height:17px;color:#333;font-weight:400;letter-spacing:0px;">Тестовая Компания №1</div>
<div class="a" style="left:1730px;top:636px;width:25px;height:25px;border-radius:13px;background:#bdc1c6;overflow:hidden"><svg width="25" height="25" viewBox="0 0 25 25"><circle cx="12.5" cy="9.5" r="4.2" fill="#fff"/><path d="M4.5 21c.8-4.5 4-6 8-6s7.2 1.5 8 6z" fill="#fff"/></svg></div>
</body></html>
